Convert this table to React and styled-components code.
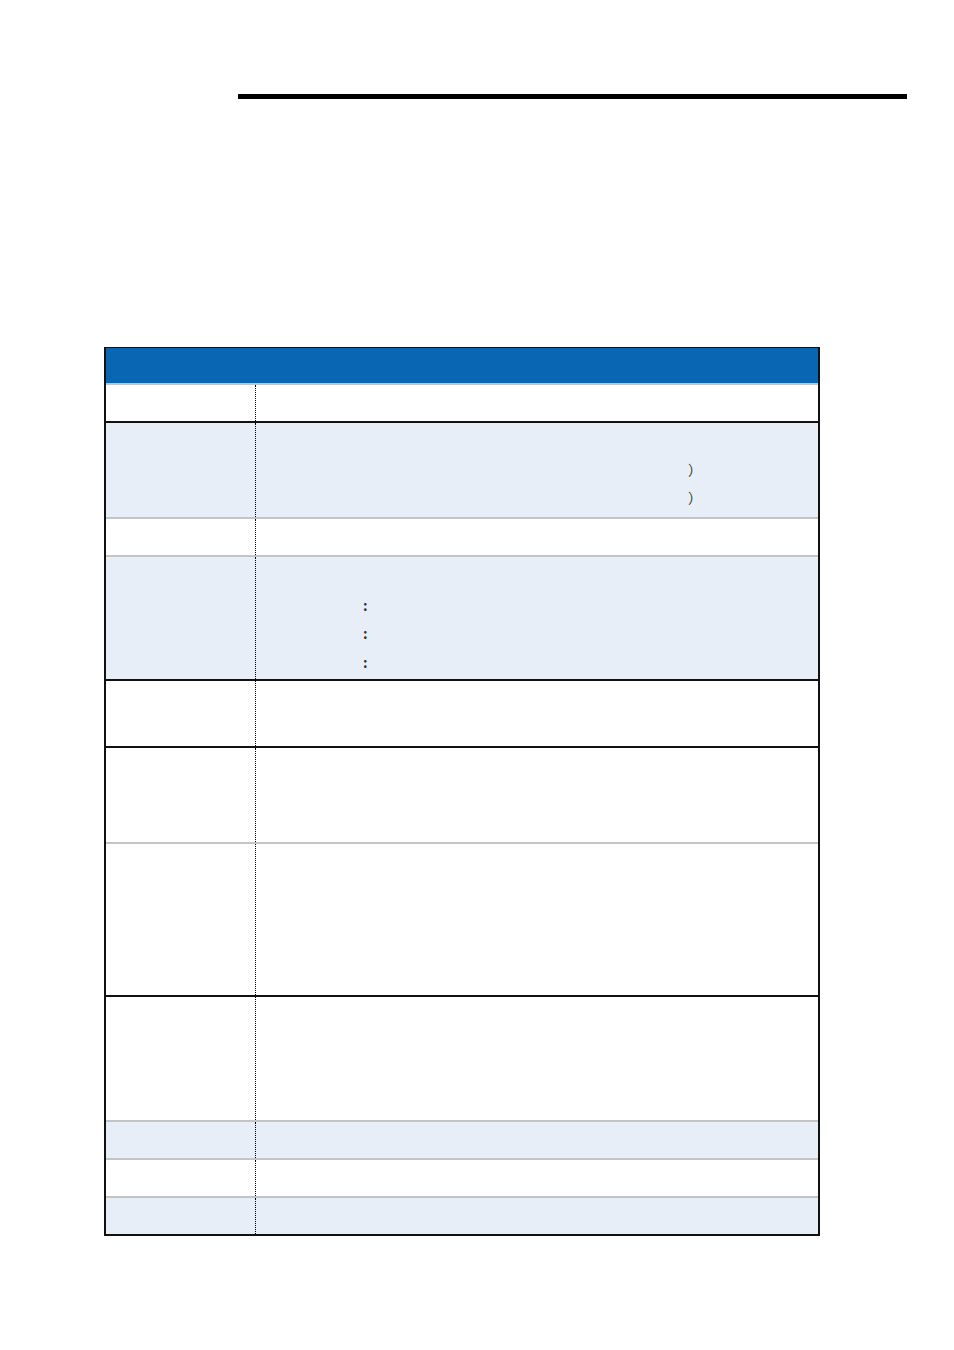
import React from "react";
import styled, { createGlobalStyle } from "styled-components";

const GlobalStyle = createGlobalStyle`
  html, body {
    margin: 0;
    padding: 0;
    background: #ffffff;
  }
  body {
    font-family: "Noto Sans CJK SC", "Liberation Sans", sans-serif;
  }
`;

const BLACK = "#111111";
const GRAY = "#c4c4c4";
const TINT = "#e7eef8";

const rows = [
  { height: 38, line: GRAY },
  {
    height: 96,
    line: BLACK,
    tint: true,
    lift: 2,
    lines: [null, { text: "）", indent: 432 }, { text: "）", indent: 432 }],
  },
  { height: 38, line: GRAY },
  {
    height: 124,
    line: GRAY,
    tint: true,
    lines: [
      null,
      { text: ":", indent: 107, bold: true },
      { text: ":", indent: 107, bold: true },
      { text: ":", indent: 107, bold: true },
    ],
  },
  { height: 67, line: BLACK },
  { height: 96, line: BLACK },
  { height: 153, line: GRAY },
  { height: 125, line: BLACK },
  { height: 38, line: GRAY, tint: true },
  { height: 38, line: GRAY },
  { height: 38, line: GRAY, tint: true },
];

export default function App() {
  return (
    <Page>
      <GlobalStyle />
      <TopRule />

      <Table>
        <HeaderRow />

        {rows.map((row, i) => (
          <Row key={i} $height={row.height} $line={row.line} $tint={row.tint}>
            <LabelCell />
            <ContentCell $lift={row.lift || 0}>
              {(row.lines || []).map((l, j) => (
                <Line key={j}>
                  {l && (
                    <Glyph $indent={l.indent} $bold={l.bold}>
                      {l.text}
                    </Glyph>
                  )}
                </Line>
              ))}
            </ContentCell>
          </Row>
        ))}
      </Table>
    </Page>
  );
}

const Page = styled.div`
  width: 954px;
  min-height: 1350px;
  padding-top: 94px;
  box-sizing: border-box;
`;

const TopRule = styled.div`
  margin-left: 238px;
  width: 669px;
  height: 5px;
  background: #000000;
`;

const Table = styled.div`
  margin: 248px 0 0 104px;
  width: 716px;
  box-sizing: border-box;
  border-left: 2px solid ${BLACK};
  border-right: 2px solid ${BLACK};
  border-bottom: 2px solid ${BLACK};
`;

const HeaderRow = styled.div`
  height: 36px;
  box-sizing: border-box;
  border-top: 1px solid ${BLACK};
  background: #0966b3;
`;

const Row = styled.div`
  display: grid;
  grid-template-columns: 150px 1fr;
  height: ${(p) => p.$height}px;
  box-sizing: border-box;
  border-top: 2px solid ${(p) => p.$line};
  background: ${(p) => (p.$tint ? TINT : "#ffffff")};
`;

const LabelCell = styled.div`
  border-right: 1px dotted #000000;
`;

const ContentCell = styled.div`
  padding-top: ${(p) => 5 - p.$lift}px;
  display: flex;
  flex-direction: column;
`;

const Line = styled.div`
  height: 28.5px;
  line-height: 28.5px;
  font-size: 14px;
  color: #333333;
`;

const Glyph = styled.span`
  margin-left: ${(p) => p.$indent}px;
  font-weight: ${(p) => (p.$bold ? 700 : 400)};
`;
